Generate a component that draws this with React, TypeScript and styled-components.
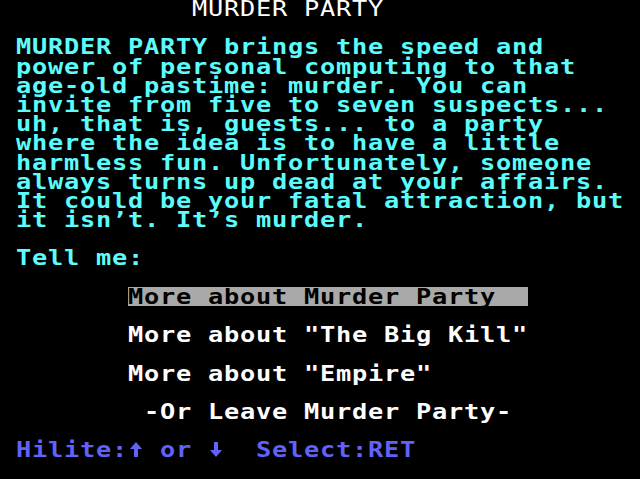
import React from "react";
import styled, { createGlobalStyle } from "styled-components";

const CELL_W = 16;
const CELL_H = 19.2;
const STRETCH = 1.15;

const Global = createGlobalStyle`
  html, body {
    margin: 0;
    padding: 0;
    background: #000;
  }
  #root {
    width: 640px;
    height: 479px;
  }
`;

const palette = {
  cyan: "#5cfcfc",
  white: "#ffffff",
  blue: "#6262f6",
  ink: "#000000",
  bar: "#a9a9a9",
};

type Tone = keyof typeof palette;

const Screen = styled.div`
  width: 640px;
  height: 479px;
  background: #000;
  overflow: hidden;
  display: flex;
  flex-direction: column;
  margin-top: -1px;
  font-family: "DejaVu Sans Mono", "Liberation Mono", monospace;
  font-size: 22px;
  -webkit-font-smoothing: none;
`;

const Line = styled.div<{ $col?: number; $tone?: Tone; $thin?: boolean }>`
  height: ${CELL_H}px;
  line-height: ${CELL_H}px;
  flex: none;
  white-space: pre;
  padding-left: ${(p) => (p.$col ?? 0) * CELL_W}px;
  color: ${(p) => palette[p.$tone ?? "cyan"]};
  font-weight: ${(p) => (p.$thin ? 400 : 700)};
  display: flex;
  align-items: stretch;
`;

/* a run of characters laid on the 16px character grid */
const Run = styled.span<{ $cells: number }>`
  display: inline-block;
  flex: none;
  width: ${(p) => p.$cells * CELL_W}px;
  height: ${CELL_H}px;
  overflow: visible;
`;

const Ink = styled.span`
  display: inline-block;
  transform: scaleX(${STRETCH});
  transform-origin: left center;
  letter-spacing: ${CELL_W / STRETCH - 13.245}px;
`;

const Chars = ({ text }: { text: string }) => (
  <Run $cells={text.length}>
    <Ink>{text}</Ink>
  </Run>
);

const Hilite = styled.span<{ $cols: number }>`
  display: inline-block;
  width: ${(p) => p.$cols * CELL_W}px;
  height: ${CELL_H}px;
  background: ${palette.bar};
  color: ${palette.ink};
`;

const Cell = styled.span`
  display: inline-flex;
  flex: none;
  width: ${CELL_W}px;
  height: ${CELL_H}px;
  align-items: flex-start;
  justify-content: center;
  padding-top: 2px;
  box-sizing: border-box;
`;

const Arrow = ({ down }: { down?: boolean }) => (
  <Cell>
    <svg width="12" height="15" viewBox="0 0 12 15" style={{ transform: down ? "rotate(180deg)" : undefined }}>
      <path d="M6 0 L12 7 L8 7 L8 15 L4 15 L4 7 L0 7 Z" fill="currentColor" />
    </svg>
  </Cell>
);

const body = [
  "MURDER PARTY brings the speed and",
  "power of personal computing to that",
  "age-old pastime: murder. You can",
  "invite from five to seven suspects...",
  "uh, that is, guests... to a party",
  "where the idea is to have a little",
  "harmless fun. Unfortunately, someone",
  "always turns up dead at your affairs.",
  "It could be your fatal attraction, but",
  "it isn’t. It’s murder.",
];

export default function App() {
  return (
    <>
      <Global />
      <Screen>
        <Line $col={12} $tone="white" $thin>
          <Chars text="MURDER PARTY" />
        </Line>
        <Line />
        {body.map((text) => (
          <Line key={text} $col={1}>
            <Chars text={text} />
          </Line>
        ))}
        <Line />
        <Line $col={1}>
          <Chars text="Tell me:" />
        </Line>
        <Line />
        <Line $col={8}>
          <Hilite $cols={25}>
            <Chars text="More about Murder Party" />
          </Hilite>
        </Line>
        <Line />
        <Line $col={8} $tone="white">
          <Chars text={'More about "The Big Kill"'} />
        </Line>
        <Line />
        <Line $col={8} $tone="white">
          <Chars text={'More about "Empire"'} />
        </Line>
        <Line />
        <Line $col={9} $tone="white">
          <Chars text="-Or Leave Murder Party-" />
        </Line>
        <Line />
        <Line $col={1} $tone="blue">
          <Chars text="Hilite:" />
          <Arrow />
          <Chars text=" or " />
          <Arrow down />
          <Chars text="  Select:RET" />
        </Line>
      </Screen>
    </>
  );
}
